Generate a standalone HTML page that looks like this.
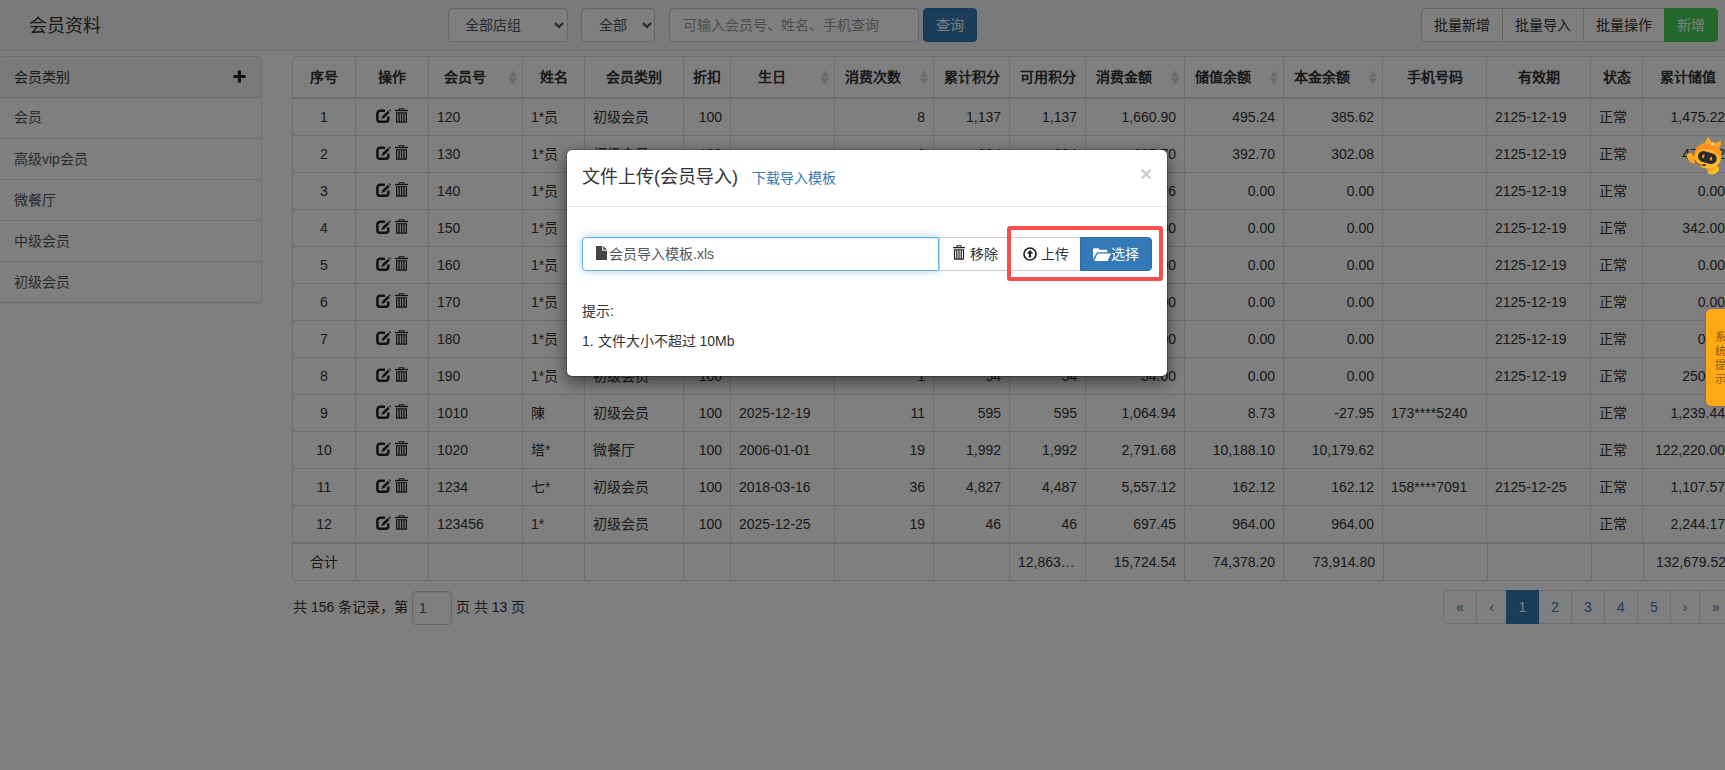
<!DOCTYPE html>
<html lang="zh-CN">
<head>
<meta charset="utf-8">
<title>会员资料</title>
<style>
*{box-sizing:border-box;}
html,body{margin:0;padding:0;}
body{width:1725px;height:770px;overflow:hidden;position:relative;background:#fff;font-family:"Liberation Sans",sans-serif;font-size:14px;line-height:20px;color:#333;}
.abs{position:absolute;}
svg{display:block;}
/* ---------- top bar ---------- */
#topbar{position:absolute;left:0;top:0;width:1725px;height:51px;background:#f5f5f5;border-bottom:1px solid #e7e7e7;}
#title{position:absolute;left:29px;top:13px;font-size:18px;line-height:26px;color:#333;white-space:nowrap;}
.fc{position:absolute;top:8px;height:34px;border:1px solid #ccc;border-radius:4px;background:#fff;font-size:14px;line-height:20px;color:#555;padding:6px 12px;white-space:nowrap;box-shadow:inset 0 1px 1px rgba(0,0,0,.075);}
.fc .chev{position:absolute;top:13px;}
.btn{position:absolute;height:34px;border:1px solid #ccc;background:#fff;color:#333;font-size:14px;line-height:20px;padding:6px 12px;white-space:nowrap;text-align:center;}
.btn-primary{background:#337ab7;border-color:#2e6da4;color:#fff;}
.btn-success{background:#46d054;border-color:#44cc52;color:#fff;}
/* ---------- left panel ---------- */
#cats{position:absolute;left:-1px;top:56px;width:263px;height:247px;border:1px solid #ddd;border-radius:4px;background:#fff;box-shadow:0 1px 1px rgba(0,0,0,.05);overflow:hidden;}
#cats .hd{height:41px;background:#f5f5f5;border-bottom:1px solid #ddd;padding:10px 14px;color:#333;position:relative;}
#cats .it{height:41px;border-top:1px solid #ddd;padding:10px 14px;color:#555;}
#cats .it.first{border-top:0;height:40px;padding-top:9px;}
/* ---------- table ---------- */
#tw{position:absolute;left:292px;top:56px;width:1445px;height:525px;border:1px solid #ddd;border-radius:4px;overflow:hidden;}
table{border-collapse:separate;border-spacing:0;table-layout:fixed;width:1440px;}
table.ft{width:1441px;}
th,td{padding:0 8px;white-space:nowrap;overflow:hidden;border-left:1px solid #ddd;font-size:14px;line-height:20px;}
th:first-child,td:first-child{border-left:0;}
th{height:42px;border-bottom:2px solid #ddd;font-weight:bold;text-align:center;color:#333;position:relative;}
th.s{padding-right:30px;}
th.s:before{content:"";position:absolute;right:5.5px;top:13px;border-left:4px solid transparent;border-right:4px solid transparent;border-bottom:7px solid #d8d8d8;}
th.s:after{content:"";position:absolute;right:5.5px;top:21px;border-left:4px solid transparent;border-right:4px solid transparent;border-top:7px solid #d8d8d8;}
td{height:37px;border-bottom:1px solid #ddd;}
.c{text-align:center;}.r{text-align:right;}.l{text-align:left;}
tfoot td{height:37px;border-top:1px solid #ddd;border-bottom:0;}
.sort{position:absolute;right:5px;top:13px;}
.ico{display:inline-block;vertical-align:top;}
td.op{padding:0;font-size:0;line-height:0;}
td.op .ie{margin:0 4px 2px 0;position:relative;top:0px;}
td.op .it2{position:relative;top:-1px;margin-bottom:1px;}
/* ---------- pager ---------- */
#pinfo{position:absolute;left:293px;top:597px;white-space:nowrap;color:#333;}
#pinput{position:absolute;left:412px;top:591px;width:40px;height:34px;border:1px solid #ccc;border-radius:4px;padding:6px 6px;color:#555;background:#fff;box-shadow:inset 0 1px 1px rgba(0,0,0,.075);}
#pinfo2{position:absolute;left:456px;top:597px;white-space:nowrap;color:#333;}
#pg{position:absolute;left:1443px;top:590px;height:34px;width:300px;z-index:0;}
#pg span{position:absolute;top:0;height:34px;border:1px solid #ddd;padding:6px 0;text-align:center;font-size:14px;line-height:20px;color:#337ab7;background:#fff;}
#pg span:first-child{border-radius:4px 0 0 4px;}
#pg span.on{background:#337ab7;border-color:#337ab7;color:#fff;z-index:2;}
/* ---------- overlay & modal ---------- */
#ov{z-index:10;position:absolute;left:0;top:0;width:1725px;height:770px;background:rgba(0,0,0,.5);}
#modal{z-index:11;position:absolute;left:566px;top:149px;width:602px;height:228px;background:#fff;border:1px solid rgba(0,0,0,.2);border-radius:6px;box-shadow:0 5px 15px rgba(0,0,0,.5);background-clip:padding-box;}
#mh{position:absolute;left:0;top:0;width:600px;height:57px;border-bottom:1px solid #e5e5e5;}
#mt{position:absolute;left:15px;top:14px;font-size:18px;line-height:26px;color:#333;white-space:nowrap;}
#ml{position:absolute;left:185px;top:18px;font-size:14px;line-height:20px;color:#337ab7;white-space:nowrap;}
#mx{position:absolute;left:573px;top:13px;font-size:21px;line-height:21px;font-weight:bold;color:#000;opacity:.2;}
#cap{position:absolute;left:15px;top:87px;width:357px;height:34px;border:1px solid #66afe9;border-radius:4px 0 0 4px;box-shadow:inset 0 1px 1px rgba(0,0,0,.075),0 0 8px rgba(102,175,233,.6);color:#555;padding:6px 12px;white-space:nowrap;}
.mb{position:absolute;top:87px;height:34px;border:1px solid #ccc;background:#fff;color:#333;white-space:nowrap;}
.mb.btn-primary{background:#337ab7;border-color:#2e6da4;color:#fff;}
.tip{position:absolute;left:15px;white-space:nowrap;color:#333;}
#red{z-index:12;position:absolute;left:1007px;top:226px;width:156px;height:55px;border:4px solid #f84e4e;border-radius:3px;}
#tab{z-index:13;position:absolute;left:1706px;top:309px;width:24px;height:97px;background:#ffa916;border-radius:5px 0 0 5px;color:#8a5a12;font-size:11px;line-height:14px;padding:21px 0 0 9px;box-shadow:0 0 4px rgba(0,0,0,.15);}
</style>
</head>
<body>
<svg width="0" height="0" style="position:absolute">
<defs>
<g id="g-edit"><path d="M9 1.8H3.9a2.5 2.5 0 0 0-2.5 2.5v5.9a2.5 2.5 0 0 0 2.5 2.5h5.9a2.5 2.5 0 0 0 2.5-2.5V7.6" fill="none" stroke="#222" stroke-width="2.5"/><path d="M11.9 1.7l1.8 1.8-5.4 5.4-3 1.2 1.2-3z" fill="#222"/><path d="M13.4 0.2l1.6 1.6-0.8 0.8-1.6-1.6z" fill="#222"/></g>
<g id="g-trash"><path d="M4.2 2.2V0.8h4.6v1.4" fill="none" stroke="#222" stroke-width="1.1"/><rect x="0" y="2" width="13" height="1.4" fill="#222"/><path fill-rule="evenodd" fill="#222" d="M1 4.4h11v10.5a0.9 0.9 0 0 1-0.9 0.9H1.9a0.9 0.9 0 0 1-0.9-0.9zM2.3 5.6v8.8h1.15V5.6zM4.75 5.6v8.8h1.15V5.6zM7.15 5.6v8.8h1.15V5.6zM9.6 5.6v8.8h1.15V5.6z"/></g>
</defs>
</svg>

<!-- ================= TOP BAR ================= -->
<div id="topbar">
  <div id="title">会员资料</div>
  <div class="fc" style="left:448px;width:120px;padding-left:16px;">全部店组<svg class="chev abs" style="left:105px;top:13px" width="10" height="7" viewBox="0 0 10 7"><path d="M1 1 L5 5 L9 1" fill="none" stroke="#4a4a4a" stroke-width="2.1"/></svg></div>
  <div class="fc" style="left:581px;width:74px;padding-left:17px;">全部<svg class="chev abs" style="left:59.5px;top:13px" width="10" height="7" viewBox="0 0 10 7"><path d="M1 1 L5 5 L9 1" fill="none" stroke="#4a4a4a" stroke-width="2.1"/></svg></div>
  <div class="fc" style="left:669px;width:250px;color:#999;padding-left:13px;">可输入会员号、姓名、手机查询</div>
  <div class="btn btn-primary" style="left:923px;top:8px;width:54px;border-radius:4px;">查询</div>

  <div class="btn" style="left:1421px;top:8px;width:82px;border-radius:4px 0 0 4px;">批量新增</div>
  <div class="btn" style="left:1502px;top:8px;width:82px;">批量导入</div>
  <div class="btn" style="left:1583px;top:8px;width:82px;">批量操作</div>
  <div class="btn btn-success" style="left:1664px;top:8px;width:54px;border-radius:0 4px 4px 0;">新增</div>
</div>

<!-- ================= LEFT PANEL ================= -->
<div id="cats">
  <div class="hd">会员类别
    <svg class="abs" style="left:232.5px;top:12.5px" width="13" height="13" viewBox="0 0 14 14"><path d="M5.2 0.5h3.4v4.8h4.9v3.4H8.6v4.8H5.2V8.7H0.4V5.3h4.8z" fill="#222"/></svg>
  </div>
  <div class="it first">会员</div>
  <div class="it">高级vip会员</div>
  <div class="it">微餐厅</div>
  <div class="it">中级会员</div>
  <div class="it">初级会员</div>
</div>

<!-- ================= TABLE ================= -->
<div id="tw">
<table>
<colgroup>
<col style="width:62px"><col style="width:73px"><col style="width:94px"><col style="width:62px"><col style="width:99px"><col style="width:47px"><col style="width:104px"><col style="width:99px"><col style="width:76px"><col style="width:76px"><col style="width:99px"><col style="width:99px"><col style="width:99px"><col style="width:104px"><col style="width:104px"><col style="width:52px"><col style="width:91px">
</colgroup>
<thead>
<tr>
<th>序号</th><th>操作</th><th class="s">会员号</th><th>姓名</th><th>会员类别</th><th>折扣</th><th class="s">生日</th><th class="s">消费次数</th><th>累计积分</th><th>可用积分</th><th class="s">消费金额</th><th class="s">储值余额</th><th class="s">本金余额</th><th>手机号码</th><th>有效期</th><th>状态</th><th>累计储值</th>
</tr>
</thead>
<tbody id="tb">
<tr><td class="c">1</td><td class="c op"><svg class="ico ie" width="15" height="14" viewBox="0 0 15 14"><use href="#g-edit"/></svg><svg class="ico it2" width="13" height="15" viewBox="0 0 13 16" preserveAspectRatio="none"><use href="#g-trash"/></svg></td><td>120</td><td>1*员</td><td>初级会员</td><td class="r">100</td><td></td><td class="r">8</td><td class="r">1,137</td><td class="r">1,137</td><td class="r">1,660.90</td><td class="r">495.24</td><td class="r">385.62</td><td></td><td>2125-12-19</td><td>正常</td><td class="r">1,475.22</td></tr>
<tr><td class="c">2</td><td class="c op"><svg class="ico ie" width="15" height="14" viewBox="0 0 15 14"><use href="#g-edit"/></svg><svg class="ico it2" width="13" height="15" viewBox="0 0 13 16" preserveAspectRatio="none"><use href="#g-trash"/></svg></td><td>130</td><td>1*员</td><td>初级会员</td><td class="r">100</td><td></td><td class="r">6</td><td class="r">334</td><td class="r">334</td><td class="r">635.70</td><td class="r">392.70</td><td class="r">302.08</td><td></td><td>2125-12-19</td><td>正常</td><td class="r">475.22</td></tr>
<tr><td class="c">3</td><td class="c op"><svg class="ico ie" width="15" height="14" viewBox="0 0 15 14"><use href="#g-edit"/></svg><svg class="ico it2" width="13" height="15" viewBox="0 0 13 16" preserveAspectRatio="none"><use href="#g-trash"/></svg></td><td>140</td><td>1*员</td><td>初级会员</td><td class="r">100</td><td></td><td class="r">1</td><td class="r">45</td><td class="r">45</td><td class="r">45.76</td><td class="r">0.00</td><td class="r">0.00</td><td></td><td>2125-12-19</td><td>正常</td><td class="r">0.00</td></tr>
<tr><td class="c">4</td><td class="c op"><svg class="ico ie" width="15" height="14" viewBox="0 0 15 14"><use href="#g-edit"/></svg><svg class="ico it2" width="13" height="15" viewBox="0 0 13 16" preserveAspectRatio="none"><use href="#g-trash"/></svg></td><td>150</td><td>1*员</td><td>初级会员</td><td class="r">100</td><td></td><td class="r">0</td><td class="r">0</td><td class="r">0</td><td class="r">0.00</td><td class="r">0.00</td><td class="r">0.00</td><td></td><td>2125-12-19</td><td>正常</td><td class="r">342.00</td></tr>
<tr><td class="c">5</td><td class="c op"><svg class="ico ie" width="15" height="14" viewBox="0 0 15 14"><use href="#g-edit"/></svg><svg class="ico it2" width="13" height="15" viewBox="0 0 13 16" preserveAspectRatio="none"><use href="#g-trash"/></svg></td><td>160</td><td>1*员</td><td>初级会员</td><td class="r">100</td><td></td><td class="r">0</td><td class="r">0</td><td class="r">0</td><td class="r">0.00</td><td class="r">0.00</td><td class="r">0.00</td><td></td><td>2125-12-19</td><td>正常</td><td class="r">0.00</td></tr>
<tr><td class="c">6</td><td class="c op"><svg class="ico ie" width="15" height="14" viewBox="0 0 15 14"><use href="#g-edit"/></svg><svg class="ico it2" width="13" height="15" viewBox="0 0 13 16" preserveAspectRatio="none"><use href="#g-trash"/></svg></td><td>170</td><td>1*员</td><td>初级会员</td><td class="r">100</td><td></td><td class="r">0</td><td class="r">0</td><td class="r">0</td><td class="r">0.00</td><td class="r">0.00</td><td class="r">0.00</td><td></td><td>2125-12-19</td><td>正常</td><td class="r">0.00</td></tr>
<tr><td class="c">7</td><td class="c op"><svg class="ico ie" width="15" height="14" viewBox="0 0 15 14"><use href="#g-edit"/></svg><svg class="ico it2" width="13" height="15" viewBox="0 0 13 16" preserveAspectRatio="none"><use href="#g-trash"/></svg></td><td>180</td><td>1*员</td><td>初级会员</td><td class="r">100</td><td></td><td class="r">0</td><td class="r">0</td><td class="r">0</td><td class="r">0.00</td><td class="r">0.00</td><td class="r">0.00</td><td></td><td>2125-12-19</td><td>正常</td><td class="r">0.00</td></tr>
<tr><td class="c">8</td><td class="c op"><svg class="ico ie" width="15" height="14" viewBox="0 0 15 14"><use href="#g-edit"/></svg><svg class="ico it2" width="13" height="15" viewBox="0 0 13 16" preserveAspectRatio="none"><use href="#g-trash"/></svg></td><td>190</td><td>1*员</td><td>初级会员</td><td class="r">100</td><td></td><td class="r">1</td><td class="r">54</td><td class="r">54</td><td class="r">54.00</td><td class="r">0.00</td><td class="r">0.00</td><td></td><td>2125-12-19</td><td>正常</td><td class="r">250.00</td></tr>
<tr><td class="c">9</td><td class="c op"><svg class="ico ie" width="15" height="14" viewBox="0 0 15 14"><use href="#g-edit"/></svg><svg class="ico it2" width="13" height="15" viewBox="0 0 13 16" preserveAspectRatio="none"><use href="#g-trash"/></svg></td><td>1010</td><td>陳</td><td>初级会员</td><td class="r">100</td><td>2025-12-19</td><td class="r">11</td><td class="r">595</td><td class="r">595</td><td class="r">1,064.94</td><td class="r">8.73</td><td class="r">-27.95</td><td>173****5240</td><td></td><td>正常</td><td class="r">1,239.44</td></tr>
<tr><td class="c">10</td><td class="c op"><svg class="ico ie" width="15" height="14" viewBox="0 0 15 14"><use href="#g-edit"/></svg><svg class="ico it2" width="13" height="15" viewBox="0 0 13 16" preserveAspectRatio="none"><use href="#g-trash"/></svg></td><td>1020</td><td>塔*</td><td>微餐厅</td><td class="r">100</td><td>2006-01-01</td><td class="r">19</td><td class="r">1,992</td><td class="r">1,992</td><td class="r">2,791.68</td><td class="r">10,188.10</td><td class="r">10,179.62</td><td></td><td></td><td>正常</td><td class="r">122,220.00</td></tr>
<tr><td class="c">11</td><td class="c op"><svg class="ico ie" width="15" height="14" viewBox="0 0 15 14"><use href="#g-edit"/></svg><svg class="ico it2" width="13" height="15" viewBox="0 0 13 16" preserveAspectRatio="none"><use href="#g-trash"/></svg></td><td>1234</td><td>七*</td><td>初级会员</td><td class="r">100</td><td>2018-03-16</td><td class="r">36</td><td class="r">4,827</td><td class="r">4,487</td><td class="r">5,557.12</td><td class="r">162.12</td><td class="r">162.12</td><td>158****7091</td><td>2125-12-25</td><td>正常</td><td class="r">1,107.57</td></tr>
<tr><td class="c">12</td><td class="c op"><svg class="ico ie" width="15" height="14" viewBox="0 0 15 14"><use href="#g-edit"/></svg><svg class="ico it2" width="13" height="15" viewBox="0 0 13 16" preserveAspectRatio="none"><use href="#g-trash"/></svg></td><td>123456</td><td>1*</td><td>初级会员</td><td class="r">100</td><td>2025-12-25</td><td class="r">19</td><td class="r">46</td><td class="r">46</td><td class="r">697.45</td><td class="r">964.00</td><td class="r">964.00</td><td></td><td></td><td>正常</td><td class="r">2,244.17</td></tr>
</tbody>
</table>
<table class="ft">
<colgroup>
<col style="width:62px"><col style="width:73px"><col style="width:94px"><col style="width:62px"><col style="width:99px"><col style="width:47px"><col style="width:104px"><col style="width:99px"><col style="width:76px"><col style="width:76px"><col style="width:99px"><col style="width:99px"><col style="width:100px"><col style="width:104px"><col style="width:104px"><col style="width:52px"><col style="width:91px">
</colgroup>
<tfoot><tr><td class="c">合计</td><td></td><td></td><td></td><td></td><td></td><td></td><td></td><td></td><td class="l">12,863…</td><td class="r">15,724.54</td><td class="r">74,378.20</td><td class="r">73,914.80</td><td></td><td></td><td></td><td class="r">132,679.52</td></tr></tfoot>
</table>
</div>

<!-- ================= PAGER ================= -->
<div id="pinfo">共 156 条记录，第</div>
<div id="pinput">1</div>
<div id="pinfo2">页 共 13 页</div>
<div id="pg"><span class="" style="left:0px;width:34px">«</span><span class="" style="left:33px;width:31px">‹</span><span class="on" style="left:63px;width:33px">1</span><span class="" style="left:95px;width:34px">2</span><span class="" style="left:128px;width:34px">3</span><span class="" style="left:161px;width:34px">4</span><span class="" style="left:194px;width:34px">5</span><span class="" style="left:227px;width:30px">›</span><span class="" style="left:256px;width:34px">»</span></div>

<!-- ================= OVERLAY ================= -->
<div id="ov"></div>

<!-- ================= MODAL ================= -->
<div id="modal">
  <div id="mh">
    <div id="mt">文件上传(会员导入)</div>
    <div id="ml">下载导入模板</div>
    <div id="mx">×</div>
  </div>
  <div id="cap"><svg class="abs" style="left:12.5px;top:8px" width="11" height="14" viewBox="0 0 11 14"><path d="M0 0h6.2v4.8H11V14H0zM7.3 0L11 3.7H7.3z" fill="#444"/></svg><span style="margin-left:14px">会员导入模板.xls</span></div>
  <div class="mb" style="left:372px;width:72px;"><svg class="abs" style="left:13px;top:7px" width="12" height="15" viewBox="0 0 13 16"><use href="#g-trash"/></svg><span class="abs" style="left:29.5px;top:6px">移除</span></div>
  <div class="mb" style="left:443px;width:71px;"><svg class="abs" style="left:11.5px;top:8.5px" width="14" height="14" viewBox="0 0 14 14"><circle cx="7" cy="7" r="6" fill="none" stroke="#222" stroke-width="1.7"/><path d="M7 2.9l3.3 3.7H8.1v3.9H5.9V6.6H3.7z" fill="#222"/></svg><span class="abs" style="left:30px;top:6px">上传</span></div>
  <div class="mb btn-primary" style="left:513px;width:72px;border-radius:0 4px 4px 0;"><svg class="abs" style="left:12px;top:10px" width="18" height="13" viewBox="0 0 18 13"><path d="M0 11.5V1.2a1 1 0 0 1 1-1h4.3l1.4 1.5h6.6a1 1 0 0 1 1 1v1.6H3.9z" fill="#fff"/><path d="M1.2 13L4.6 5.4H18L14.7 13z" fill="#fff"/></svg><span class="abs" style="left:30px;top:6px;color:#fff">选择</span></div>
  <div class="tip" style="top:151px;">提示:</div>
  <div class="tip" style="top:181px;">1. 文件大小不超过 10Mb</div>
</div>
<div id="red"></div>

<!-- ================= FLOATING ================= -->
<svg id="bot" style="position:absolute;left:1680px;top:130px;z-index:13" width="45" height="50" viewBox="1680 130 45 50">
<defs>
<linearGradient id="gh" x1="0.2" y1="0" x2="0.6" y2="1"><stop offset="0" stop-color="#ff8f24"/><stop offset="0.55" stop-color="#ff9620"/><stop offset="1" stop-color="#ffc02a"/></linearGradient>
<linearGradient id="gf" x1="0" y1="0" x2="0.3" y2="1"><stop offset="0" stop-color="#ff9410"/><stop offset="1" stop-color="#ffc526"/></linearGradient>
<linearGradient id="gb" x1="0" y1="0" x2="1" y2="0.4"><stop offset="0" stop-color="#ffb21a"/><stop offset="1" stop-color="#ffa41e"/></linearGradient>
</defs>
<ellipse cx="1713.2" cy="170" rx="6.3" ry="4" transform="rotate(-22 1713.2 170)" fill="url(#gf)"/>
<ellipse cx="1691.4" cy="158.2" rx="3.5" ry="6.1" transform="rotate(-38 1691.4 158.2)" fill="#ffa81c"/>
<ellipse cx="1707.8" cy="155.6" rx="13.8" ry="13.1" fill="url(#gh)"/>
<ellipse cx="1707.2" cy="158.2" rx="12.6" ry="9" transform="rotate(14 1707.2 158.2)" fill="#ffb638" opacity=".8"/>
<rect x="1697.9" y="152.2" width="19" height="10.8" rx="5.3" transform="rotate(15 1707.4 157.6)" fill="#2b2b2a"/>
<ellipse cx="1703.3" cy="156.3" rx="1.1" ry="2.1" transform="rotate(14 1703.3 156.3)" fill="#ff9c1c"/>
<ellipse cx="1711" cy="158.8" rx="1.1" ry="2.1" transform="rotate(14 1711 158.8)" fill="#ff9c1c"/>
<path d="M1712.6 144.2l-6.4-1.2c-0.8-0.2-0.9-0.9-0.5-1.6l1.8-3.4c0.4-0.7 1.1-0.8 1.6-0.2zM1712.6 144.2l7.2-3.2c0.9-0.4 1.5 0.1 1.4 1l-1 4.8c-0.2 0.9-0.9 1.2-1.6 0.8z" fill="url(#gb)"/>
<path d="M1710.4 142.6l3.4-0.6 1.2 2.6-3.2 1.2z" fill="#ffcf78"/>
<path d="M1694.6 160.2q2.2 5 8.6 5" fill="none" stroke="#3a3532" stroke-width=".8"/>
<ellipse cx="1704.3" cy="165.2" rx="1.6" ry="1.1" fill="#33302e"/>
</svg>
<div id="tab">系<br>统<br>提<br>示</div>

</body>
</html>
